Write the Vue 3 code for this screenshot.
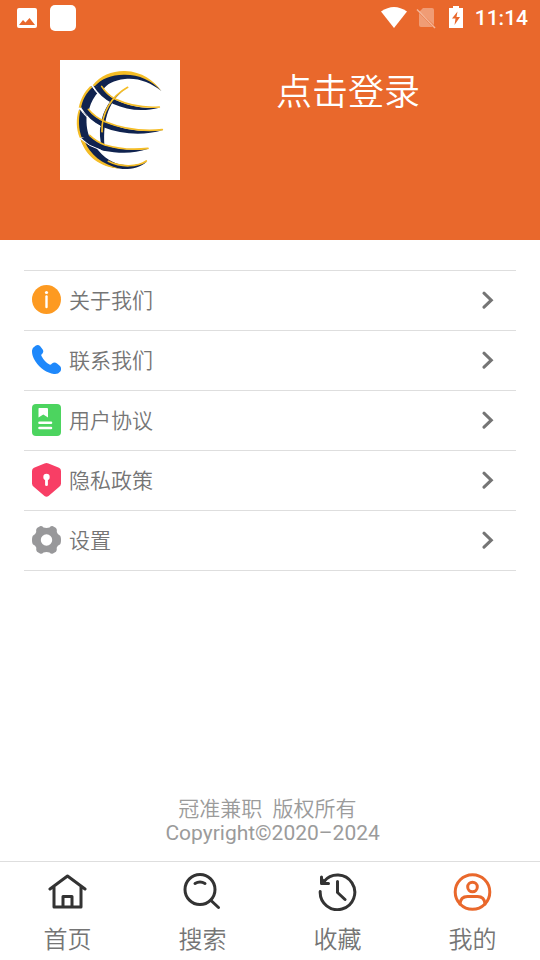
<template>
  <div class="page">
    <header class="header">
      <div class="status">
        <div class="status-side">
          <svg width="20" height="20" viewBox="0 0 20 20">
            <path fill="#fff" fill-rule="evenodd" d="M2 0H18Q20 0 20 2V18Q20 20 18 20H2Q0 20 0 18V2Q0 0 2 0ZM2 17H18L12.500 10L8.500 14.500L6 12Z" />
          </svg>
          <span class="app-dot"></span>
        </div>
        <div class="status-side">
          <svg class="wifi" width="26" height="22" viewBox="0 0 26 22">
            <path fill="#fff" d="M0 4.500Q13 -4.500 26 4.500L13 21Z" />
          </svg>
          <svg class="sim" width="20" height="22" viewBox="0 0 20 22">
            <path fill="#fff" opacity=".35" d="M7 1H16Q18 1 18 3V18L3.500 4.500ZM3 6L16.500 20H5Q3 20 3 18Z" />
            <path fill="none" stroke="#fff" stroke-width="1.500" opacity=".5" d="M1 2.500L19 21" />
          </svg>
          <svg class="battery" width="14" height="24" viewBox="0 0 14 24">
            <path fill="#fff" fill-rule="evenodd" d="M4 0H10V2H14V22H0V2H4ZM8.500 5.500L3 12.500H6.500L5.500 19L11 11H7.500Z" />
          </svg>
          <span class="time">11:14</span>
        </div>
      </div>
      <div class="profile">
        <svg class="avatar" viewBox="30 30 360 360">
          <g fill="#10234f">
            <path d="M131 106C155 77 190 66 225 68C276 70 310 94 334 123C302 98 265 83 225 87C190 91 171 102 160 118Z" />
            <path d="M125 109L142 130C128 147 121 162 116 184L92 171C97 145 109 125 125 109Z" />
            <path d="M89 178L110 197C108 224 112 246 119 262L91 262C80 233 81 202 89 178Z" />
            <path d="M92 268L137 291C160 323 190 343 225 345C252 347 274 343 290 335C270 353 244 358 218 357C161 353 112 324 92 268Z" />
            <path d="M130 107L155 110Q172 137 198 150C240 170 288 177 328 173C280 186 232 181 190 162Q150 141 130 107Z" />
            <path d="M93 172L114 178Q134 203 165 216C225 241 280 247 338 241C280 257 216 254 158 231Q115 210 93 172Z" />
            <path d="M94 264L119 256Q139 275 165 286C212 300 252 302 295 296C250 312 207 310 160 302Q119 290 94 264Z" />
            <path d="M224 119C172 155 156 220 165 303L156 292C143 246 151 201 175 162Q193 136 224 119Z" />
          </g>
          <g fill="none" stroke="#f5bd26" stroke-width="5" stroke-linecap="round">
            <path d="M155 109Q171 134 197 148C238 167 286 174 328 171" />
            <path d="M115 178Q134 202 165 215C225 239 280 245 337 239" />
            <path d="M119 256Q139 275 165 285C212 299 252 300 294 295" />
            <path d="M233 112C183 140 154 190 156 245" />
            <path d="M175 334C214 353 263 351 289 333" />
          </g>
          <g fill="#f5bd26">
            <path d="M128 106C151 76 188 62 225 63C276 65 311 91 334 123C306 91 267 74 225 74C187 73 155 85 134 109Z" />
            <path d="M121 108C102 127 92 147 86 173L93 174C98 148 109 129 127 112Z" />
            <path d="M86 181C78 206 78 237 89 263L95 263C85 235 85 208 91 181Z" />
            <path d="M91 267C108 320 150 352 210 356C154 343 120 312 105 276Z" />
          </g>
          <g fill="none" stroke="#fff" stroke-width="3">
            <path d="M125 106Q145 139 178 160M88 173Q110 210 152 230M90 265Q118 290 152 300" />
          </g>
        </svg>
        <button class="login" type="button">点击登录</button>
      </div>
    </header>

    <main class="menu">
      <a v-for="item in items" :key="item.icon" class="row" href="#">
        <svg class="row-icon" viewBox="0 0 29 35">
          <template v-if="item.icon === 'about'">
            <circle cx="14.500" cy="16.500" r="14.500" fill="#fd9a21" />
            <circle cx="14.500" cy="9.500" r="1.600" fill="#fff" />
            <path d="M14.500 13.500V24" stroke="#fff" stroke-width="2.400" stroke-linecap="round" />
          </template>
          <path v-else-if="item.icon === 'contact'" fill="#1e88fb" d="M3.500 2.800Q6 1.200 8 3L10.700 6.500Q12 8.500 10.500 10.500Q8.800 11.500 9.500 13C11.500 17 14 19.500 17.500 21.500Q19.200 22 20 20.500Q22.500 18.500 25 20.500L28 23Q30 25.500 28.300 28.500Q26 31.500 22 31C15 30 8 25.500 3.500 18.500C.5 13.500 0 11 0 7.500Q.5 4.500 3.500 2.800Z" />
          <template v-else-if="item.icon === 'terms'">
            <rect y="1" width="29" height="32" rx="4" fill="#4cd45f" />
            <path fill="#fff" d="M7 5H15Q16 5 16 6V14.500L11.300 11.500L6.500 14.500V6Q6.500 5 7 5Z" />
            <path d="M7.500 19.700H19M7.500 25H19" stroke="#fff" stroke-width="2.600" stroke-linecap="round" />
          </template>
          <template v-else-if="item.icon === 'privacy'">
            <path fill="#f83e65" d="M12.500 .6Q14.500 -.4 16.500 .6L27 4.700Q29 5.500 29 8V20.500Q29 22.500 27 24L16.500 33Q14.500 34.500 12.500 33L2 24Q0 22.500 0 20.500V8Q0 5.500 2 4.700Z" />
            <circle cx="14.500" cy="14" r="3.200" fill="#fff" />
            <path d="M14.500 15V21.700" stroke="#fff" stroke-width="2.800" stroke-linecap="round" />
          </template>
          <path v-else fill="#98989a" fill-rule="evenodd" d="M8 3.200Q10 2.800 11.500 4.500Q14.500 5.300 17.500 4.500Q19 2.800 21 3.200L24 5Q25.300 6.500 24.800 9Q25.600 11.500 27.500 12.200Q29 13 29 17Q29 21 27.500 21.800Q25.600 22.500 24.700 24.800Q25.200 27.500 24 28.800L21 30.500Q19 31.200 17.500 29.500Q14.500 28.700 11.500 29.500Q10 31.200 8 30.500L5 28.800Q3.800 27.500 4.300 24.800Q3.400 22.500 1.500 21.800Q0 21 0 17Q0 13 1.500 12.200Q3.400 11.500 4.200 9Q3.700 6.500 5 5ZM14.500 11.300A5.700 5.700 0 1 0 14.500 22.700A5.700 5.700 0 1 0 14.500 11.300Z" />
        </svg>
        <span class="row-text">{{ item.text }}</span>
        <svg class="arrow" viewBox="0 0 12 19">
          <path d="M2 2.200L9.300 9.200L2 16.200" />
        </svg>
      </a>
    </main>

    <footer class="copyright">
      <p class="owner">冠准兼职&nbsp;&nbsp;版权所有&nbsp;</p>
      <p>&nbsp;Copyright©2020–2024</p>
    </footer>

    <nav class="tabs">
      <a v-for="tab in tabs" :key="tab.icon" class="tab" :class="{ active: tab.icon === current }" href="#" @click.prevent="current = tab.icon">
        <svg class="tab-icon" viewBox="0 0 40 38">
          <path v-if="tab.icon === 'home'" d="M2 16L19.500 3L37 16M6 14V34H33V14M15 34V23.500H24V34" />
          <template v-else-if="tab.icon === 'search'">
            <circle cx="17" cy="16.500" r="15" />
            <path d="M28 27.500L35.500 34.500M12 10.500Q17 7.500 22 10.500" />
          </template>
          <template v-else-if="tab.icon === 'history'">
            <path d="M6 8.500A17.300 17.300 0 1 1 2.200 18.500M3.500 4V10.500H10.500M19.500 8.500V19.500L27 26.500" />
            <path d="M3.500 6L7.500 10.500Z" />
          </template>
          <template v-else>
            <circle cx="19.500" cy="19" r="17.300" />
            <circle cx="19.500" cy="14" r="4.800" />
            <path d="M7 31Q7.500 23.500 14.500 23.500H24.500Q31.500 23.500 32 31" />
          </template>
        </svg>
        <span class="tab-text">{{ tab.text }}</span>
      </a>
    </nav>
  </div>
</template>

<script setup>
import { ref } from "vue"

const items = [
  { icon: "about", text: "关于我们" },
  { icon: "contact", text: "联系我们" },
  { icon: "terms", text: "用户协议" },
  { icon: "privacy", text: "隐私政策" },
  { icon: "settings", text: "设置" }
]

const tabs = [
  { icon: "home", text: "首页" },
  { icon: "search", text: "搜索" },
  { icon: "history", text: "收藏" },
  { icon: "mine", text: "我的" }
]

const current = ref("mine")
</script>

<style>
body {
  margin: 0;
  background: #fff;
}
</style>

<style scoped>
.page {
  display: flex;
  flex-direction: column;
  min-height: 100vh;
  font-family: Roboto, "Noto Sans CJK SC", sans-serif;
  color: #757575;
}

.page svg {
  display: block;
  flex-shrink: 0;
}

.header {
  background: #e9682c;
  color: #fff;
  padding-bottom: 60px;
}

.status {
  display: flex;
  justify-content: space-between;
  height: 36px;
  padding: 0 12px 0 17px;
}

.status-side {
  display: flex;
  align-items: center;
}

.app-dot {
  width: 26px;
  height: 26px;
  margin-left: 13px;
  border-radius: 5px;
  background: #fff;
}

.sim {
  margin-left: 9px;
}

.battery {
  margin: 0 12px 0 13px;
}

.time {
  font-size: 21px;
  font-weight: 500;
  line-height: 38px;
}

.profile {
  display: flex;
  align-items: flex-start;
  gap: 96px;
  padding: 24px 60px 0;
}

.avatar {
  width: 120px;
  height: 120px;
  background: #fff;
}

.login {
  padding: 0;
  border: none;
  background: none;
  color: inherit;
  font-family: inherit;
  font-size: 36px;
  font-weight: 350;
  line-height: 66px;
  white-space: nowrap;
  cursor: pointer;
}

.menu {
  margin: 30px 24px 0;
  border-bottom: 1px solid #dedede;
}

.row {
  display: flex;
  align-items: center;
  box-sizing: border-box;
  height: 60px;
  padding: 0 22px 0 8px;
  border-top: 1px solid #dedede;
  color: inherit;
  text-decoration: none;
}

.row-icon {
  width: 29px;
  height: 35px;
}

.row-text {
  flex: 1;
  margin-left: 8px;
  font-size: 21px;
  font-weight: 350;
  line-height: 32px;
}

.arrow {
  width: 12px;
  height: 19px;
  fill: none;
  stroke: #757575;
  stroke-width: 3;
  stroke-linecap: round;
}

.copyright {
  margin-top: auto;
  padding-bottom: 16px;
  color: #9b9b9b;
  font-size: 21px;
  line-height: 24px;
  text-align: center;
}

.copyright p {
  margin: 0;
}

.copyright .owner {
  font-weight: 350;
}

.tabs {
  display: flex;
  border-top: 1px solid #dedede;
}

.tab {
  flex: 1;
  display: flex;
  flex-direction: column;
  align-items: center;
  padding: 11px 0 4px;
  color: inherit;
  text-decoration: none;
}

.tab-icon {
  width: 40px;
  height: 38px;
  fill: none;
  stroke: #333;
  stroke-width: 3;
  stroke-linecap: round;
  stroke-linejoin: round;
}

.active .tab-icon {
  stroke: #e9682c;
}

.tab-text {
  margin-top: 13px;
  font-size: 24px;
  font-weight: 350;
  line-height: 32px;
}
</style>
